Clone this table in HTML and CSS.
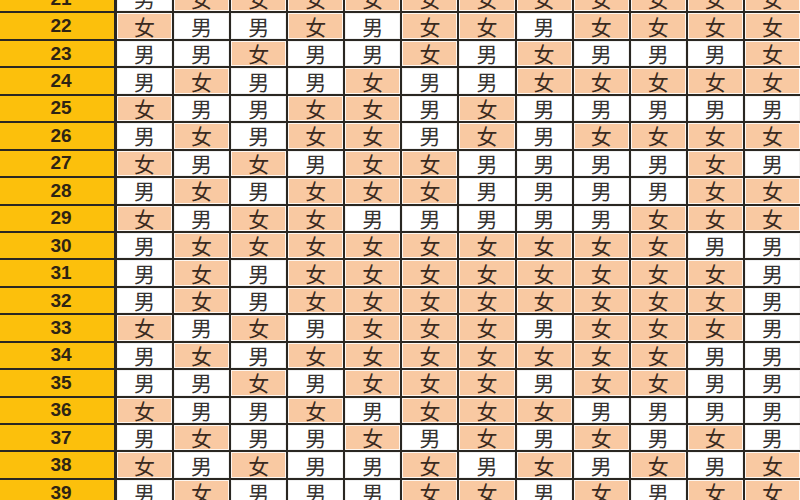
FILE: index.html
```html
<!DOCTYPE html>
<html lang="zh">
<head>
<meta charset="utf-8">
<title>生男生女表</title>
<link rel="stylesheet" href="styles.css">
</head>
<body>
<div class="sheet">
<div class="age">21</div><div class="c m">男</div><div class="c f">女</div><div class="c f">女</div><div class="c f">女</div><div class="c f">女</div><div class="c f">女</div><div class="c f">女</div><div class="c f">女</div><div class="c f">女</div><div class="c f">女</div><div class="c f">女</div><div class="c f">女</div>
<div class="age">22</div><div class="c f">女</div><div class="c m">男</div><div class="c m">男</div><div class="c f">女</div><div class="c m">男</div><div class="c f">女</div><div class="c f">女</div><div class="c m">男</div><div class="c f">女</div><div class="c f">女</div><div class="c f">女</div><div class="c f">女</div>
<div class="age">23</div><div class="c m">男</div><div class="c m">男</div><div class="c f">女</div><div class="c m">男</div><div class="c m">男</div><div class="c f">女</div><div class="c m">男</div><div class="c f">女</div><div class="c m">男</div><div class="c m">男</div><div class="c m">男</div><div class="c f">女</div>
<div class="age">24</div><div class="c m">男</div><div class="c f">女</div><div class="c m">男</div><div class="c m">男</div><div class="c f">女</div><div class="c m">男</div><div class="c m">男</div><div class="c f">女</div><div class="c f">女</div><div class="c f">女</div><div class="c f">女</div><div class="c f">女</div>
<div class="age">25</div><div class="c f">女</div><div class="c m">男</div><div class="c m">男</div><div class="c f">女</div><div class="c f">女</div><div class="c m">男</div><div class="c f">女</div><div class="c m">男</div><div class="c m">男</div><div class="c m">男</div><div class="c m">男</div><div class="c m">男</div>
<div class="age">26</div><div class="c m">男</div><div class="c f">女</div><div class="c m">男</div><div class="c f">女</div><div class="c f">女</div><div class="c m">男</div><div class="c f">女</div><div class="c m">男</div><div class="c f">女</div><div class="c f">女</div><div class="c f">女</div><div class="c f">女</div>
<div class="age">27</div><div class="c f">女</div><div class="c m">男</div><div class="c f">女</div><div class="c m">男</div><div class="c f">女</div><div class="c f">女</div><div class="c m">男</div><div class="c m">男</div><div class="c m">男</div><div class="c m">男</div><div class="c f">女</div><div class="c m">男</div>
<div class="age">28</div><div class="c m">男</div><div class="c f">女</div><div class="c m">男</div><div class="c f">女</div><div class="c f">女</div><div class="c f">女</div><div class="c m">男</div><div class="c m">男</div><div class="c m">男</div><div class="c m">男</div><div class="c f">女</div><div class="c f">女</div>
<div class="age">29</div><div class="c f">女</div><div class="c m">男</div><div class="c f">女</div><div class="c f">女</div><div class="c m">男</div><div class="c m">男</div><div class="c m">男</div><div class="c m">男</div><div class="c m">男</div><div class="c f">女</div><div class="c f">女</div><div class="c f">女</div>
<div class="age">30</div><div class="c m">男</div><div class="c f">女</div><div class="c f">女</div><div class="c f">女</div><div class="c f">女</div><div class="c f">女</div><div class="c f">女</div><div class="c f">女</div><div class="c f">女</div><div class="c f">女</div><div class="c m">男</div><div class="c m">男</div>
<div class="age">31</div><div class="c m">男</div><div class="c f">女</div><div class="c m">男</div><div class="c f">女</div><div class="c f">女</div><div class="c f">女</div><div class="c f">女</div><div class="c f">女</div><div class="c f">女</div><div class="c f">女</div><div class="c f">女</div><div class="c m">男</div>
<div class="age">32</div><div class="c m">男</div><div class="c f">女</div><div class="c m">男</div><div class="c f">女</div><div class="c f">女</div><div class="c f">女</div><div class="c f">女</div><div class="c f">女</div><div class="c f">女</div><div class="c f">女</div><div class="c f">女</div><div class="c m">男</div>
<div class="age">33</div><div class="c f">女</div><div class="c m">男</div><div class="c f">女</div><div class="c m">男</div><div class="c f">女</div><div class="c f">女</div><div class="c f">女</div><div class="c m">男</div><div class="c f">女</div><div class="c f">女</div><div class="c f">女</div><div class="c m">男</div>
<div class="age">34</div><div class="c m">男</div><div class="c f">女</div><div class="c m">男</div><div class="c f">女</div><div class="c f">女</div><div class="c f">女</div><div class="c f">女</div><div class="c f">女</div><div class="c f">女</div><div class="c f">女</div><div class="c m">男</div><div class="c m">男</div>
<div class="age">35</div><div class="c m">男</div><div class="c m">男</div><div class="c f">女</div><div class="c m">男</div><div class="c f">女</div><div class="c f">女</div><div class="c f">女</div><div class="c m">男</div><div class="c f">女</div><div class="c f">女</div><div class="c m">男</div><div class="c m">男</div>
<div class="age">36</div><div class="c f">女</div><div class="c m">男</div><div class="c m">男</div><div class="c f">女</div><div class="c m">男</div><div class="c f">女</div><div class="c f">女</div><div class="c f">女</div><div class="c m">男</div><div class="c m">男</div><div class="c m">男</div><div class="c m">男</div>
<div class="age">37</div><div class="c m">男</div><div class="c f">女</div><div class="c m">男</div><div class="c m">男</div><div class="c f">女</div><div class="c m">男</div><div class="c f">女</div><div class="c m">男</div><div class="c f">女</div><div class="c m">男</div><div class="c f">女</div><div class="c m">男</div>
<div class="age">38</div><div class="c f">女</div><div class="c m">男</div><div class="c f">女</div><div class="c m">男</div><div class="c m">男</div><div class="c f">女</div><div class="c m">男</div><div class="c f">女</div><div class="c m">男</div><div class="c f">女</div><div class="c m">男</div><div class="c f">女</div>
<div class="age">39</div><div class="c m">男</div><div class="c f">女</div><div class="c m">男</div><div class="c m">男</div><div class="c m">男</div><div class="c f">女</div><div class="c f">女</div><div class="c m">男</div><div class="c f">女</div><div class="c m">男</div><div class="c f">女</div><div class="c f">女</div>
</div>
</body>
</html>
```
FILE: styles.css
```css
html, body {
  margin: 0;
  padding: 0;
  width: 800px;
  height: 500px;
  overflow: hidden;
  background: #ffffff;
}
.sheet {
  display: grid;
  grid-template-columns: 115px repeat(12, 1fr);
  grid-auto-rows: 25.44px;
  column-gap: 2px;
  row-gap: 2px;
  background: #2a2722;
  margin-top: -14px;
  width: 800px;
}
.age {
  display: flex;
  align-items: center;
  justify-content: center;
  padding-left: 8px;
  background: #fcc00c;
  border-right: 1px solid #2a2722;
  font-family: "Liberation Sans", Arial, sans-serif;
  font-weight: bold;
  font-size: 19px;
  color: #2e2414;
}
.c {
  display: flex;
  align-items: center;
  justify-content: center;
  font-family: "Noto Sans CJK SC", "Noto Sans", sans-serif;
  font-size: 21px;
  line-height: 1;
  color: #353230;
  box-shadow: inset 0 0 0 1px #fdf6f0;
}
.m {
  background: #ffffff;
  box-shadow: inset 0 0 0 1px #f1f1f1;
}
.f {
  background: #f9c9a2;
  color: #3a2a1e;
}
```
